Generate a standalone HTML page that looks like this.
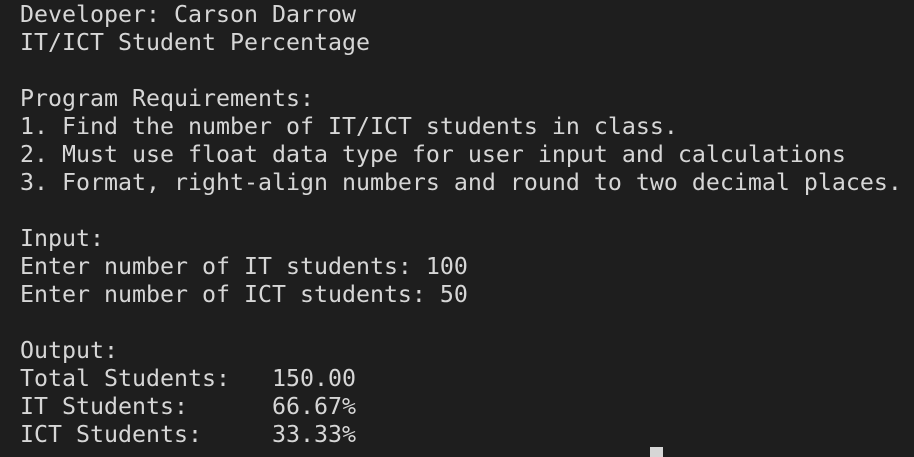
<!DOCTYPE html>
<html><head><meta charset="utf-8"><style>
html,body{margin:0;padding:0;background:#1e1e1e;width:914px;height:452px;overflow:hidden}
pre{margin:0;position:absolute;left:20px;top:1px;font-family:"DejaVu Sans Mono","Liberation Mono",monospace;font-size:23.25px;line-height:28px;color:#d6d6d6;white-space:pre}
.cur{position:absolute;left:650px;top:447px;width:13px;height:10px;background:#d6d6d6}
</style></head><body>
<pre>Developer: Carson Darrow
IT/ICT Student Percentage

Program Requirements:
1. Find the number of IT/ICT students in class.
2. Must use float data type for user input and calculations
3. Format, right-align numbers and round to two decimal places.

Input:
Enter number of IT students: 100
Enter number of ICT students: 50

Output:
Total Students:   150.00
IT Students:      66.67%
ICT Students:     33.33%</pre>
<div class="cur"></div>
</body></html>
